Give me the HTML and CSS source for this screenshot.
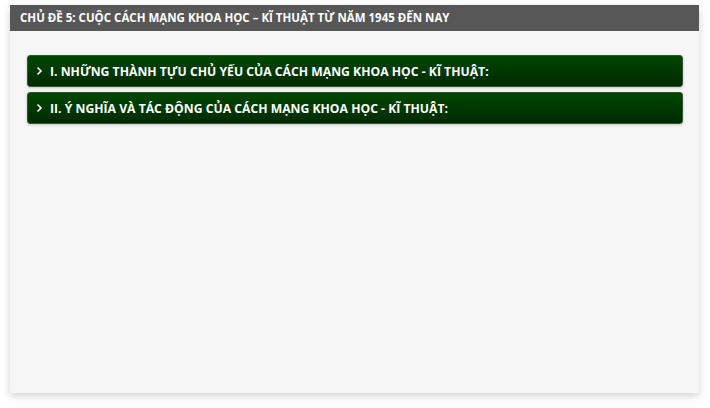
FILE: index.html
```html
<!DOCTYPE html>
<html lang="vi">
<head>
<meta charset="utf-8">
<link rel="stylesheet" href="styles.css">
</head>
<body>
<div class="card">
  <div class="card-header">CHỦ ĐỀ 5: CUỘC CÁCH MẠNG KHOA HỌC – KĨ THUẬT TỪ NĂM 1945 ĐẾN NAY</div>
  <div class="card-body">
    <div class="acc-item">
      <svg class="chev" width="7" height="10" viewBox="0 0 7 10"><path d="M1.5 1.5 L5 5 L1.5 8.5" fill="none" stroke="#fff" stroke-width="1.6"/></svg>
      <span>I. NHỮNG THÀNH TỰU CHỦ YẾU CỦA CÁCH MẠNG KHOA HỌC - KĨ THUẬT:</span>
    </div>
    <div class="acc-item">
      <svg class="chev" width="7" height="10" viewBox="0 0 7 10"><path d="M1.5 1.5 L5 5 L1.5 8.5" fill="none" stroke="#fff" stroke-width="1.6"/></svg>
      <span>II. Ý NGHĨA VÀ TÁC ĐỘNG CỦA CÁCH MẠNG KHOA HỌC - KĨ THUẬT:</span>
    </div>
  </div>
</div>
</body>
</html>
```
FILE: styles.css
```css
* { box-sizing: border-box; }
html, body { margin: 0; padding: 0; background: #ffffff; }
body {
  padding: 5px 11px 15px 10px;
  min-height: 408px;
  font-family: "Open Sans", "Noto Sans", sans-serif;
}
.card {
  width: 689px;
  height: 388px;
  background: #f6f6f6;
  box-shadow: 0 3px 8px rgba(0,0,0,0.18);
  display: flex;
  flex-direction: column;
}
.card-header {
  height: 26px;
  background: #575757;
  color: #ffffff;
  font-weight: 700;
  font-size: 11.5px;
  line-height: 26px;
  padding-left: 10px;
  white-space: nowrap;
}
.card-body {
  padding: 24px 16px 0 17px;
  display: flex;
  flex-direction: column;
  gap: 5px;
}
.acc-item {
  height: 32px;
  border: 1px solid #2a5a2a;
  border-radius: 3px;
  background: linear-gradient(#004600, #002a00);
  box-shadow: 0 1px 3px rgba(0,0,0,0.2);
  color: #ffffff;
  font-weight: 700;
  font-size: 12.2px;
  display: flex;
  align-items: center;
  padding-left: 8px;
  gap: 7px;
  white-space: nowrap;
}
.chev { flex: none; }
```
